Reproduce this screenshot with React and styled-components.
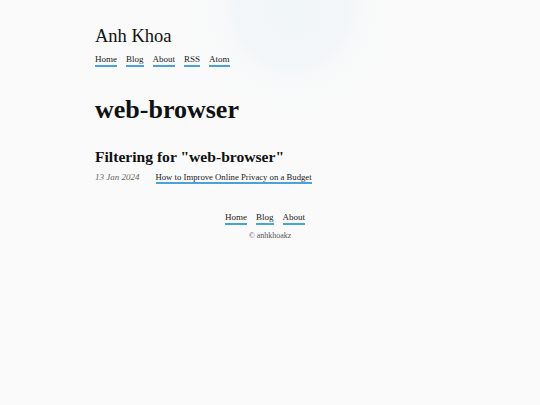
import React from "react";
import styled, { createGlobalStyle } from "styled-components";

const Global = createGlobalStyle`
  html, body { margin: 0; padding: 0; }
  body {
    background: #fafafa;
    font-family: "Liberation Serif", "DejaVu Serif", serif;
    color: #111;
    min-height: 405px;
  }
`;

const Page = styled.div`
  min-height: 405px;
  background:
    radial-gradient(circle at 292px 10px, rgba(241, 246, 248, 1) 0, rgba(242, 246, 248, 0.85) 55px, rgba(246, 248, 249, 0.6) 72px, rgba(250, 250, 250, 0) 112px);
`;

const Container = styled.div`
  width: 350px;
  margin: 0 auto;
  padding-top: 25px;
`;

const SiteTitle = styled.div`
  font-size: 18.5px;
  line-height: 22px;
  color: #111;
`;

const Nav = styled.nav`
  display: flex;
  gap: 9px;
  margin-top: 7px;
`;

const Link = styled.a`
  font-size: ${(p) => p.$size || 9}px;
  color: #222;
  text-decoration: none;
  border-bottom: 2px solid #4aa3d8;
  line-height: 1.2;
  white-space: nowrap;
`;

const Tag = styled.h1`
  margin: 28px 0 0;
  font-size: 26px;
  line-height: 30px;
  font-weight: bold;
`;

const Heading = styled.h2`
  margin: 23px 0 0;
  font-size: 15.6px;
  line-height: 18px;
  font-weight: bold;
`;

const Row = styled.div`
  display: flex;
  align-items: baseline;
  gap: 16px;
  margin-top: 6px;
`;

const DateText = styled.span`
  font-style: italic;
  color: #666;
  font-size: 9px;
  white-space: nowrap;
`;

const Footer = styled.footer`
  display: flex;
  flex-direction: column;
  align-items: center;
  margin-top: 28px;
`;

const FooterNav = styled.div`
  display: flex;
  gap: 9px;
  margin-right: 10px;
`;

const Copy = styled.div`
  margin-top: 6px;
  font-size: 8px;
  line-height: 9px;
  color: #555;
`;

export default function App() {
  return (
    <>
      <Global />
      <Page>
        <Container>
          <SiteTitle>Anh Khoa</SiteTitle>
          <Nav>
            {["Home", "Blog", "About", "RSS", "Atom"].map((t) => (
              <Link key={t} href="#">{t}</Link>
            ))}
          </Nav>
          <Tag>web-browser</Tag>
          <Heading>Filtering for "web-browser"</Heading>
          <Row>
            <DateText>13 Jan 2024</DateText>
            <Link href="#" $size={8.7}>How to Improve Online Privacy on a Budget</Link>
          </Row>
        </Container>
        <Footer>
          <FooterNav>
            {["Home", "Blog", "About"].map((t) => (
              <Link key={t} href="#">{t}</Link>
            ))}
          </FooterNav>
          <Copy>© anhkhoakz</Copy>
        </Footer>
      </Page>
    </>
  );
}
